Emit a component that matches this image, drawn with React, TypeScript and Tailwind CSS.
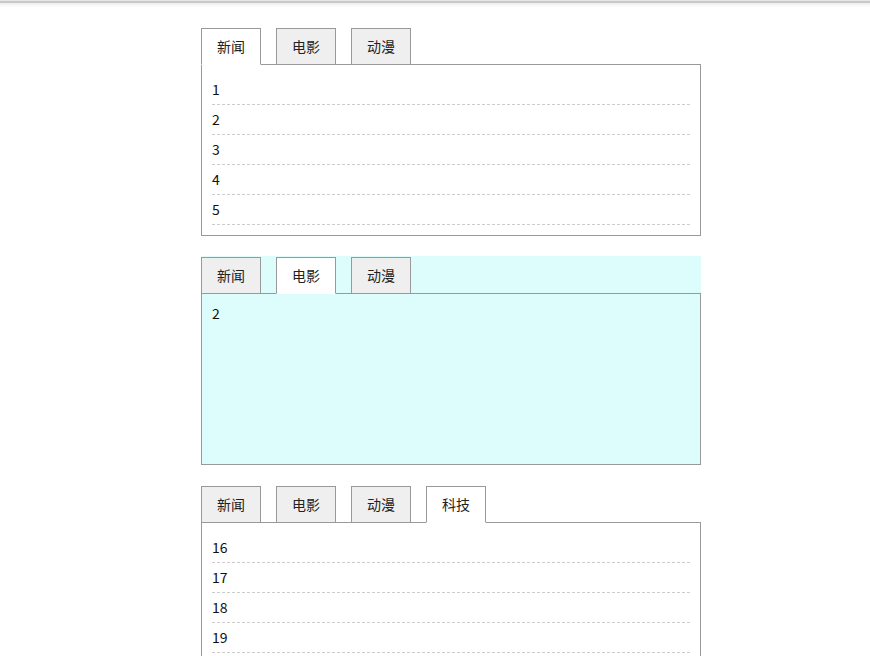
import type { ReactNode } from 'react';

interface TabPanel {
  tabs: string[];
  active: number;
  items: string[];
  plain?: boolean;
  tinted?: boolean;
}

const panels: TabPanel[] = [
  { tabs: ['新闻', '电影', '动漫'], active: 0, items: ['1', '2', '3', '4', '5'] },
  { tabs: ['新闻', '电影', '动漫'], active: 1, items: ['2'], plain: true, tinted: true },
  { tabs: ['新闻', '电影', '动漫', '科技'], active: 3, items: ['16', '17', '18', '19'] },
];

function joinClasses(...values: Array<string | false | null | undefined>) {
  return values.filter(Boolean).join(' ');
}

function Tab({ label, isActive }: { label: string; isActive: boolean }) {
  return (
    <div
      className={joinClasses(
        'relative z-10 flex h-[37px] w-[60px] items-center justify-center border border-[#999] text-[14px] text-[#222]',
        isActive ? 'border-b-white bg-white' : 'bg-[#efefef]'
      )}
    >
      {label}
    </div>
  );
}

function Panel({ panel }: { panel: TabPanel }): ReactNode {
  return (
    <section className={joinClasses('pt-px', panel.tinted ? 'bg-[#ddfcfc]' : 'bg-white')}>
      <div className="flex h-[36px] gap-[15px]">
        {panel.tabs.map((tab, i) => (
          <Tab key={tab} label={tab} isActive={i === panel.active} />
        ))}
      </div>
      <div className="h-[172px] overflow-hidden border border-[#999] p-[10px]">
        {panel.plain ? (
          <div className="text-[14px] leading-[18px] text-[#111]">{panel.items[0]}</div>
        ) : (
          <ul>
            {panel.items.map((item) => (
              <li
                key={item}
                className="h-[30px] border-b border-dashed border-[#ccc] text-[14px] leading-[29px] text-[#111]"
              >
                {item}
              </li>
            ))}
          </ul>
        )}
      </div>
    </section>
  );
}

export default function App() {
  return (
    <div
      className="h-[656px] w-full overflow-hidden bg-white"
      style={{ fontFamily: '"Noto Sans CJK SC", "Noto Sans", sans-serif' }}
    >
      <div className="h-px bg-[#e6e6e6]" />
      <div className="h-[2px] bg-[#c9c9c9]" />
      <div className="h-[4px] bg-gradient-to-b from-[#ededed] to-white" />
      <div className="ml-[201px] mt-[20px] flex w-[500px] flex-col gap-[20px]">
        {panels.map((panel, i) => (
          <Panel key={i} panel={panel} />
        ))}
      </div>
    </div>
  );
}
